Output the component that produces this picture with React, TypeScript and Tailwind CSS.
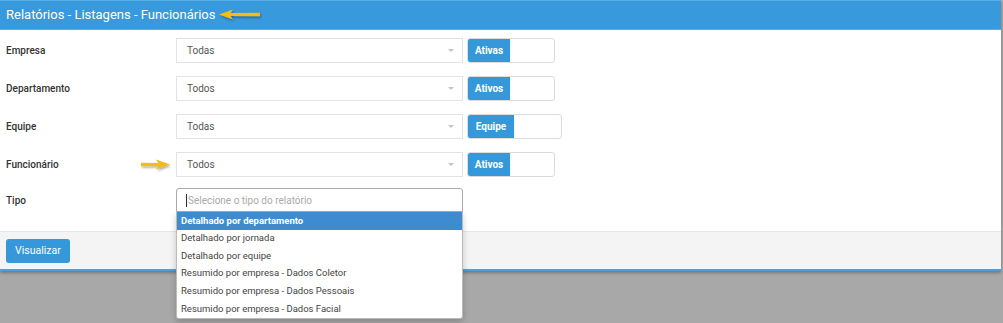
import React from "react";

const rows = [
  { label: "Empresa", value: "Todas", toggle: "Ativas", wide: false, arrow: false },
  { label: "Departamento", value: "Todos", toggle: "Ativos", wide: false, arrow: false },
  { label: "Equipe", value: "Todas", toggle: "Equipe", wide: true, arrow: false },
  { label: "Funcionário", value: "Todos", toggle: "Ativos", wide: false, arrow: true },
];

const tipos = [
  "Detalhado por departamento",
  "Detalhado por jornada",
  "Detalhado por equipe",
  "Resumido por empresa - Dados Coletor",
  "Resumido por empresa - Dados Pessoais",
  "Resumido por empresa - Dados Facial",
];

// seta amarela de anotação (sombra leve)
const Arrow = ({ left, w }: { left?: boolean; w: number }) => (
  <svg width={w} height="14" viewBox={`0 0 ${w} 14`} className={left ? "" : "-scale-x-100"}>
    <defs>
      <filter id={left ? "shL" : "shR"} x="-20%" y="-50%" width="140%" height="200%">
        <feDropShadow dx={left ? 1 : -1} dy="1.5" stdDeviation="1" floodColor="#000" floodOpacity="0.35" />
      </filter>
    </defs>
    <g filter={`url(#${left ? "shL" : "shR"})`}>
      <path d={`M1 6.5 L15 1.5 L12.5 5.1 L${w - 2} 4.8 L${w - 2} 8.2 L12.5 7.9 L15 11.5 Z`} fill="#f3bd12" />
    </g>
  </svg>
);

const Select = ({ value }: { value: string }) => (
  <div className="w-[287px] h-[25px] border border-[#e3e3e3] bg-white flex items-center justify-between pl-[10px] pr-[8px] text-[10px] text-[#555]">
    <span>{value}</span>
    <span className="w-0 h-0 border-l-[3px] border-r-[3px] border-t-[3px] border-l-transparent border-r-transparent border-t-[#c4c4c4]" />
  </div>
);

const Toggle = ({ text, wide }: { text: string; wide: boolean }) => (
  <div className={`${wide ? "w-[95px]" : "w-[88px]"} h-[25px] border border-[#dcdcdc] rounded-[3px] flex bg-white`}>
    <div className={`${wide ? "w-[46px]" : "w-[42px]"} h-full bg-[#3498db] rounded-l-[2px] text-white text-[10px] font-bold flex items-center justify-center`}>
      {text}
    </div>
  </div>
);

export default function App() {
  return (
    <div className="w-[1003px] h-[323px] bg-[#a8a8a8] overflow-hidden" style={{ fontFamily: "Roboto, 'Liberation Sans', sans-serif" }}>
      <div className="w-[1001px] bg-white border-b-2 border-[#4a9fdc] shadow-[0_2px_3px_rgba(0,0,0,0.3)]">
        <div className="h-[30px] bg-[#3899dc] border-t border-[#5aaee6] border-b border-b-[#5da9e0] flex items-center px-[6px] text-white text-[13px] gap-[3px]">
          <span>Relatórios - Listagens - Funcionários</span>
          <Arrow left w={44} />
        </div>
        <div className="relative pt-[8px] pb-[19px] flex flex-col gap-[13px]">
          {rows.map((r) => (
            <div key={r.label} className="flex items-center h-[25px]">
              <div className="w-[176px] pl-[6px] text-[10px] text-[#333] font-medium flex items-center justify-between pr-[5px]">
                <span>{r.label}</span>
                {r.arrow && <Arrow w={32} />}
              </div>
              <Select value={r.value} />
              <div className="ml-[4px]">
                <Toggle text={r.toggle} wide={r.wide} />
              </div>
            </div>
          ))}
          <div className="flex items-center h-[24px] -mt-[2px]">
            <div className="w-[176px] pl-[6px] text-[10px] text-[#333] font-medium">Tipo</div>
            <div className="relative">
              <div className="w-[287px] h-[24px] border border-[#aaa] rounded-t-[3px] bg-white flex items-center pl-[9px] text-[10px] text-[#aaa]">
                <span className="w-px h-[13px] bg-[#333] mr-[1px]" />
                <span>Selecione o tipo do relatório</span>
              </div>
              <div className="absolute left-0 top-[24px] w-[287px] bg-white border border-[#bbb] border-t-0 shadow-[0_3px_6px_rgba(0,0,0,0.2)] z-10 rounded-b-[3px]">
                {tipos.map((t, i) => (
                  <div
                    key={t}
                    className={`h-[17.6px] flex items-center pl-[4px] text-[9.5px] ${
                      i === 0 ? "bg-[#3f8bd0] text-white font-bold" : "text-[#444]"
                    }`}
                  >
                    {t}
                  </div>
                ))}
              </div>
            </div>
          </div>
        </div>
        <div className="bg-[#f4f4f4] border-t border-[#e6e6e6] h-[38px] px-[6px] flex items-center">
          <button className="h-[24px] px-[9px] bg-[#3498db] text-white text-[10.5px] rounded-[3px]">Visualizar</button>
        </div>
      </div>
    </div>
  );
}
